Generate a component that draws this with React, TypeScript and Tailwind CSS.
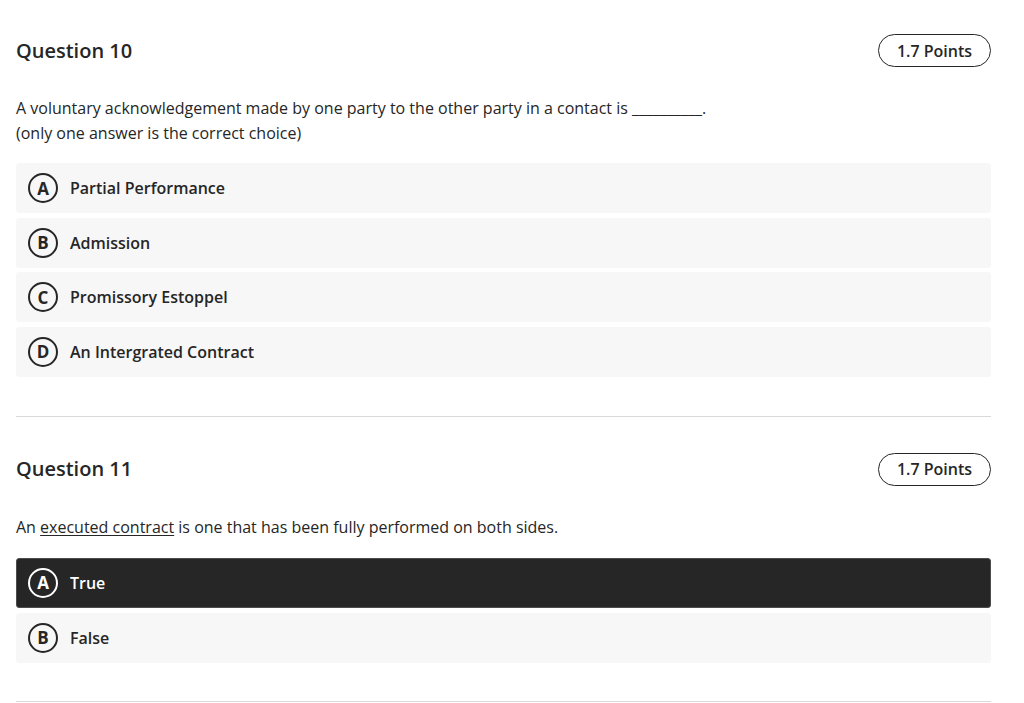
import React from 'react';

interface OptionProps {
  letter: string;
  label: string;
  selected?: boolean;
}

const Option = ({ letter, label, selected }: OptionProps) => (
  <div
    className={`flex h-[50px] items-center gap-3 rounded-[3px] border px-[11px] ${
      selected
        ? 'border-[#4d4d4d] bg-[#262626] text-white'
        : 'border-[#f7f7f7] bg-[#f7f7f7] text-[#262626]'
    }`}
  >
    <div
      className={`flex h-[30px] w-[30px] shrink-0 items-center justify-center rounded-full border-2 text-[17px] leading-none font-bold ${
        selected ? 'border-white' : 'border-[#262626]'
      }`}
    >
      {letter}
    </div>
    <span className="text-[16px] font-semibold">{label}</span>
  </div>
);

const Points = () => (
  <div className="flex h-[33px] w-[113px] items-center justify-center rounded-full border border-[#262626] text-[16px] font-semibold text-[#262626]">
    1.7 Points
  </div>
);

export default function App() {
  return (
    <div
      className="min-h-[703px] bg-white pl-4 pr-[33px] text-[#262626]"
      style={{ fontFamily: '"Open Sans", "Noto Sans", sans-serif' }}
    >
      <section className="border-b border-[#d9d9d9] pt-[34px] pb-[39px]">
        <div className="flex items-center justify-between">
          <h2 className="text-[20px] font-semibold">Question 10</h2>
          <Points />
        </div>
        <p className="mt-[29px] text-[16px] leading-[25px]">
          A voluntary acknowledgement made by one party to the other party in a contact is
          __________.
          <br />
          (only one answer is the correct choice)
        </p>
        <div className="mt-[17px] flex flex-col gap-[4.5px]">
          <Option letter="A" label="Partial Performance" />
          <Option letter="B" label="Admission" />
          <Option letter="C" label="Promissory Estoppel" />
          <Option letter="D" label="An Intergrated Contract" />
        </div>
      </section>
      <section className="border-b border-[#d9d9d9] pt-[36px] pb-[38px]">
        <div className="flex items-center justify-between">
          <h2 className="text-[20px] font-semibold">Question 11</h2>
          <Points />
        </div>
        <p className="mt-[29px] text-[16px] leading-[25px]">
          An <span className="underline underline-offset-2">executed contract</span> is one that
          has been fully performed on both sides.
        </p>
        <div className="mt-[18px] flex flex-col gap-[5px]">
          <Option letter="A" label="True" selected />
          <Option letter="B" label="False" />
        </div>
      </section>
    </div>
  );
}
